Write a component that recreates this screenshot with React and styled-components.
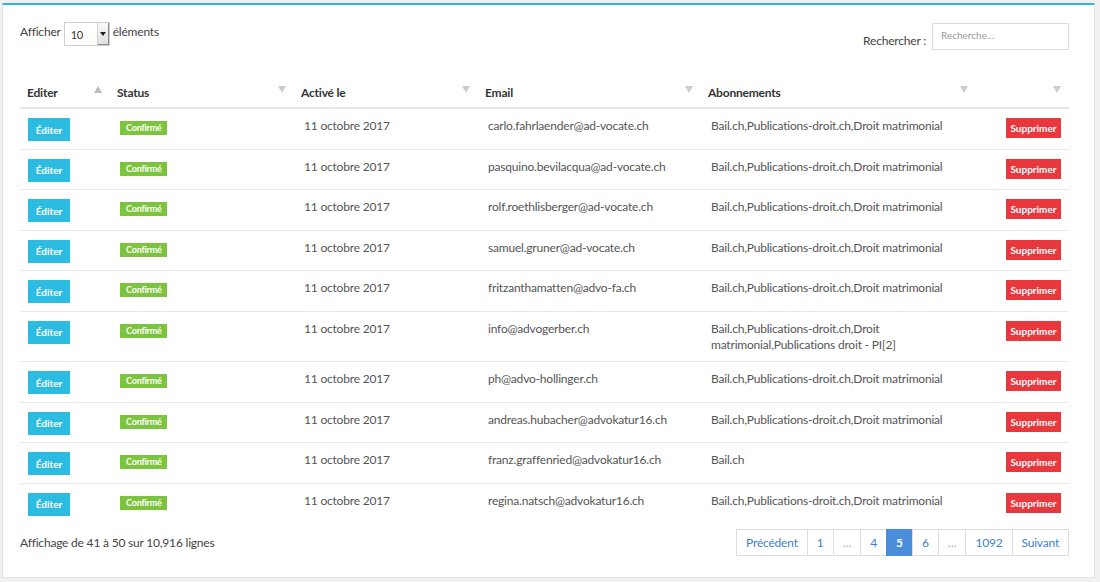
import React from 'react';
import styled, { createGlobalStyle } from 'styled-components';

const GlobalStyle = createGlobalStyle`
  html, body {
    margin: 0;
    padding: 0;
    background: #f1f1f1;
  }
  body {
    font-family: Lato, "Open Sans", sans-serif;
    font-size: 12px;
    letter-spacing: -0.2px;
    color: #555;
  }
`;

const Panel = styled.div`
  margin: 3px 5px 4px 2px;
  background: #fff;
  border: 1px solid #e2e2e2;
  border-top: 2px solid #2bb7e0;
  padding: 16px 25px 21px 17px;
`;

const TopBar = styled.div`
  display: flex;
  justify-content: space-between;
  align-items: flex-start;
  height: 27px;
`;

const LengthControl = styled.label`
  display: flex;
  align-items: flex-start;
  gap: 3px;
  color: #444;
  line-height: 20px;
  margin-top: 1px;
`;

const SelectBox = styled.div`
  display: flex;
  width: 46px;
  height: 24px;
  box-sizing: border-box;
  border: 1px solid #cfcfcf;
  background: #fff;
  font-size: 11px;
  color: #333;
`;

const SelectValue = styled.span`
  flex: 1;
  display: flex;
  align-items: center;
  padding-left: 6px;
  padding-top: 2px;
`;

const SelectArrow = styled.span`
  width: 11px;
  display: flex;
  align-items: center;
  justify-content: center;
  background: linear-gradient(#fafafa, #dedede);
  border-left: 1px solid #d0d0d0;
  box-shadow: inset -1px -1px 0 #8a8a8a;

  &::after {
    content: '';
    border-left: 3px solid transparent;
    border-right: 3px solid transparent;
    border-top: 4px solid #222;
  }
`;

const SearchControl = styled.label`
  display: flex;
  align-items: flex-end;
  gap: 6px;
  color: #444;
  margin-top: 2px;
`;

const SearchLabel = styled.span`
  margin-bottom: 2px;
`;

const SearchInput = styled.input`
  width: 137px;
  height: 27px;
  box-sizing: border-box;
  border: 1px solid #ddd;
  padding: 0 8px 4px;
  font-family: inherit;
  font-size: 10px;
  color: #333;
  outline: none;

  &::placeholder {
    color: #999;
  }
`;

const Table = styled.table`
  margin-top: 26px;
  width: 1049px;
  table-layout: fixed;
  border-collapse: collapse;
`;

const Th = styled.th`
  text-align: left;
  padding: 10px 8px 6px 7px;
  line-height: 17px;
  font-weight: 700;
  color: #333;
  border-bottom: 2px solid #e6e6e6;
`;

const HeadInner = styled.div`
  display: flex;
  justify-content: space-between;
  align-items: center;
`;

const SortArrow = styled.span`
  width: 0;
  height: 0;
  margin-top: -7px;
  border-left: 4px solid transparent;
  border-right: 4px solid transparent;
  ${({ $up }) => ($up
    ? 'border-bottom: 7px solid #bdbdbd;'
    : 'border-top: 7px solid #cdcdcd;')}
`;

const Td = styled.td`
  vertical-align: top;
  padding: 9px 10px 7.5px ${({ $first }) => ($first ? '8px' : '10px')};
  line-height: 16.5px;
  border-top: 1px solid #e8e8e8;
  text-align: ${({ $right }) => ($right ? 'right' : 'left')};
  padding-right: ${({ $right }) => ($right ? '8px' : '10px')};
`;

const Button = styled.button`
  display: inline-block;
  border: 0;
  border-radius: 0;
  color: #fff;
  font-family: inherit;
  font-weight: 700;
  font-size: 10px;
  letter-spacing: 0;
  cursor: pointer;
  background: ${({ $danger }) => ($danger ? '#e8383d' : '#2cbbe1')};
  width: ${({ $danger }) => ($danger ? '55px' : '42px')};
  height: ${({ $danger }) => ($danger ? '20px' : '23px')};
  padding: 0;
  vertical-align: top;
`;

const Badge = styled.span`
  display: inline-block;
  margin-top: 3px;
  background: #7cc43d;
  color: #fff;
  font-weight: 700;
  font-size: 9px;
  line-height: 14px;
  padding: 0 5px 0 6px;
  vertical-align: top;
`;

const Footer = styled.div`
  display: flex;
  justify-content: space-between;
  align-items: center;
  margin-top: 6px;
  color: #444;
`;

const Pagination = styled.ul`
  display: flex;
  list-style: none;
  margin: 0;
  padding: 0;
`;

const PageItem = styled.li`
  height: 27px;
  box-sizing: border-box;
  display: flex;
  align-items: center;
  padding: 0 9px;
  border: 1px solid #dedede;
  margin-left: -1px;
  color: ${({ $active, $muted }) => ($active ? '#fff' : $muted ? '#aaa' : '#3d7fd0')};
  background: ${({ $active }) => ($active ? '#4a8edb' : '#fff')};
  border-color: ${({ $active }) => ($active ? '#4a8edb' : '#dedede')};
  font-weight: ${({ $active }) => ($active ? 700 : 400)};
`;

const columns = [
  { label: 'Editer', width: 90, up: true },
  { label: 'Status', width: 184 },
  { label: 'Activé le', width: 184 },
  { label: 'Email', width: 223 },
  { label: 'Abonnements', width: 275 },
  { label: '', width: 93 },
];

const FULL = 'Bail.ch,Publications-droit.ch,Droit matrimonial';

const rows = [
  ['carlo.fahrlaender@ad-vocate.ch', FULL],
  ['pasquino.bevilacqua@ad-vocate.ch', FULL],
  ['rolf.roethlisberger@ad-vocate.ch', FULL],
  ['samuel.gruner@ad-vocate.ch', FULL],
  ['fritzanthamatten@advo-fa.ch', FULL],
  ['info@advogerber.ch', `${FULL},Publications droit - PI[2]`],
  ['ph@advo-hollinger.ch', FULL],
  ['andreas.hubacher@advokatur16.ch', FULL],
  ['franz.graffenried@advokatur16.ch', 'Bail.ch'],
  ['regina.natsch@advokatur16.ch', FULL],
];

const pages = [
  { label: 'Précédent' },
  { label: '1' },
  { label: '…', muted: true },
  { label: '4' },
  { label: '5', active: true },
  { label: '6' },
  { label: '…', muted: true },
  { label: '1092' },
  { label: 'Suivant' },
];

export default function App() {
  return (
    <>
      <GlobalStyle />
      <Panel>
        <TopBar>
          <LengthControl>
            Afficher
            <SelectBox>
              <SelectValue>10</SelectValue>
              <SelectArrow />
            </SelectBox>
            éléments
          </LengthControl>
          <SearchControl>
            <SearchLabel>Rechercher :</SearchLabel>
            <SearchInput placeholder="Recherche..." />
          </SearchControl>
        </TopBar>

        <Table>
          <colgroup>
            {columns.map((c, i) => <col key={i} style={{ width: c.width }} />)}
          </colgroup>
          <thead>
            <tr>
              {columns.map((c, i) => (
                <Th key={i}>
                  <HeadInner>
                    <span>{c.label}</span>
                    <SortArrow $up={c.up} />
                  </HeadInner>
                </Th>
              ))}
            </tr>
          </thead>
          <tbody>
            {rows.map(([email, subs]) => (
              <tr key={email}>
                <Td $first><Button>Éditer</Button></Td>
                <Td><Badge>Confirmé</Badge></Td>
                <Td>11 octobre 2017</Td>
                <Td>{email}</Td>
                <Td>{subs}</Td>
                <Td $right><Button $danger>Supprimer</Button></Td>
              </tr>
            ))}
          </tbody>
        </Table>

        <Footer>
          <span>Affichage de 41 à 50 sur 10,916 lignes</span>
          <Pagination>
            {pages.map((p, i) => (
              <PageItem key={i} $active={p.active} $muted={p.muted}>{p.label}</PageItem>
            ))}
          </Pagination>
        </Footer>
      </Panel>
    </>
  );
}
